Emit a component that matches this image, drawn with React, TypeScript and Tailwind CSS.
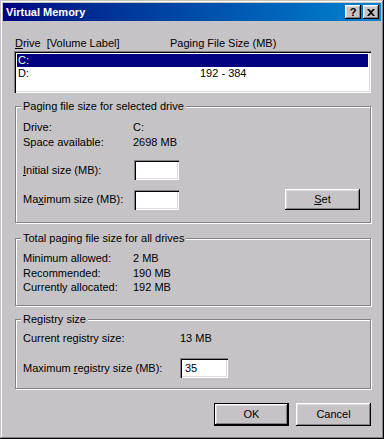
import type { ReactNode } from 'react';

// classic 3D edges
const raised =
  'shadow-[inset_-1px_-1px_0_#000,inset_1px_1px_0_#fff,inset_-2px_-2px_0_#848284,inset_2px_2px_0_#dedbde]';
const sunken =
  'shadow-[inset_1px_1px_0_#848284,inset_2px_2px_0_#000,inset_-1px_-1px_0_#fff,inset_-2px_-2px_0_#dedbde]';

function Group({ title, className, children }: { title: string; className?: string; children: ReactNode }) {
  return (
    <div className={`ml-[1px] border border-[#848284] shadow-[1px_1px_0_#fff,inset_1px_1px_0_#fff] ${className ?? ''}`}>
      <div className="-mt-[7px] ml-[5px] w-fit bg-[#c6c3c6] px-[2px] leading-[13px]">{title}</div>
      {children}
    </div>
  );
}

function Button({ children, isDefault, className }: { children: ReactNode; isDefault?: boolean; className?: string }) {
  if (isDefault) {
    return (
      <div className={`border border-black ${className ?? ''}`}>
        <div className={`flex h-full w-full items-center justify-center ${raised}`}>{children}</div>
      </div>
    );
  }
  return <div className={`flex items-center justify-center ${raised} ${className ?? ''}`}>{children}</div>;
}

function Field({ value, className }: { value?: string; className?: string }) {
  return (
    <div className={`flex h-[20px] items-center bg-white pl-[5px] ${sunken} ${className ?? ''}`}>{value}</div>
  );
}

export default function App() {
  return (
    <div className="h-[439px] w-[384px] overflow-hidden bg-[#c6c3c6] p-[3px] font-['Liberation_Sans',Arial,sans-serif] text-[11px] leading-[13px] text-black shadow-[inset_-1px_-1px_0_#000,inset_1px_1px_0_#c6c3c6,inset_-2px_-2px_0_#848284,inset_2px_2px_0_#fff]">
      {/* Title bar */}
      <div className="flex h-[18px] items-center bg-linear-to-r from-[#000080] to-[#1084d0] pl-[3px] pr-[2px]">
        <span className="font-bold text-white">Virtual Memory</span>
        <div className="ml-auto flex gap-[2px]">
          <div className={`flex h-[14px] w-[16px] items-center justify-center bg-[#c6c3c6] text-[11px] font-bold ${raised}`}>
            ?
          </div>
          <div className={`flex h-[14px] w-[16px] items-center justify-center bg-[#c6c3c6] ${raised}`}>
            <svg width="8" height="7" viewBox="0 0 8 7">
              <path d="M0 0h2l2 2 2-2h2L5 3.5 8 7H6L4 5 2 7H0l3-3.5z" fill="#000" />
            </svg>
          </div>
        </div>
      </div>

      <div className="pl-[11px] pr-[10px]">
        {/* Drive list */}
        <div className="mt-[16px] flex pl-[1px]">
          <span className="w-[155px] whitespace-pre">
            <span className="underline">D</span>rive  [Volume Label]
          </span>
          <span>Paging File Size (MB)</span>
        </div>
        <div className={`mt-[1px] h-[42px] bg-white p-[3px] pt-[3px] ${sunken}`}>
          <div className="flex h-[13px] items-center bg-[#000080] pl-[1px] text-white">C:</div>
          <div className="flex h-[13px] items-center pl-[1px]">
            <span className="w-[182px]">D:</span>
            <span>192 - 384</span>
          </div>
        </div>

        {/* Selected drive */}
        <Group title="Paging file size for selected drive" className="mt-[13px] pb-[12px]">
          <div className="mt-[7px] pl-[7px] leading-[15px]">
            <div className="flex">
              <span className="w-[110px]">Drive:</span>
              <span>C:</span>
            </div>
            <div className="flex">
              <span className="w-[110px]">Space available:</span>
              <span>2698 MB</span>
            </div>
          </div>
          <div className="mt-[10px] flex items-center pl-[7px]">
            <span className="w-[111px]">
              <span className="underline">I</span>nitial size (MB):
            </span>
            <Field className="w-[45px]" />
          </div>
          <div className="mt-[9px] flex items-center pl-[7px]">
            <span className="w-[111px]">
              Ma<span className="underline">x</span>imum size (MB):
            </span>
            <Field className="w-[45px]" />
            <Button className="ml-auto mr-[10px] h-[21px] w-[75px]">
              <span>
                <span className="underline">S</span>et
              </span>
            </Button>
          </div>
        </Group>

        {/* Totals */}
        <Group title="Total paging file size for all drives" className="mt-[15px] pb-[10.5px]">
          <div className="mt-[6px] pl-[7px] leading-[14.5px]">
            <div className="flex">
              <span className="w-[110px]">Minimum allowed:</span>
              <span>2 MB</span>
            </div>
            <div className="flex">
              <span className="w-[110px]">Recommended:</span>
              <span>190 MB</span>
            </div>
            <div className="flex">
              <span className="w-[110px]">Currently allocated:</span>
              <span>192 MB</span>
            </div>
          </div>
        </Group>

        {/* Registry */}
        <Group title="Registry size" className="mt-[13px] pb-[10px]">
          <div className="mt-[5px] flex pl-[7px] leading-[15px]">
            <span className="w-[157px]">Current registry size:</span>
            <span>13 MB</span>
          </div>
          <div className="mt-[12px] flex items-center pl-[7px]">
            <span className="w-[157px]">
              Maximum <span className="underline">r</span>egistry size (MB):
            </span>
            <Field value="35" className="w-[48px]" />
          </div>
        </Group>

        {/* Dialog buttons */}
        <div className="mt-[14px] flex justify-end gap-[7px]">
          <Button isDefault className="h-[23px] w-[75px]">
            OK
          </Button>
          <Button className="h-[23px] w-[75px]">Cancel</Button>
        </div>
      </div>
    </div>
  );
}
